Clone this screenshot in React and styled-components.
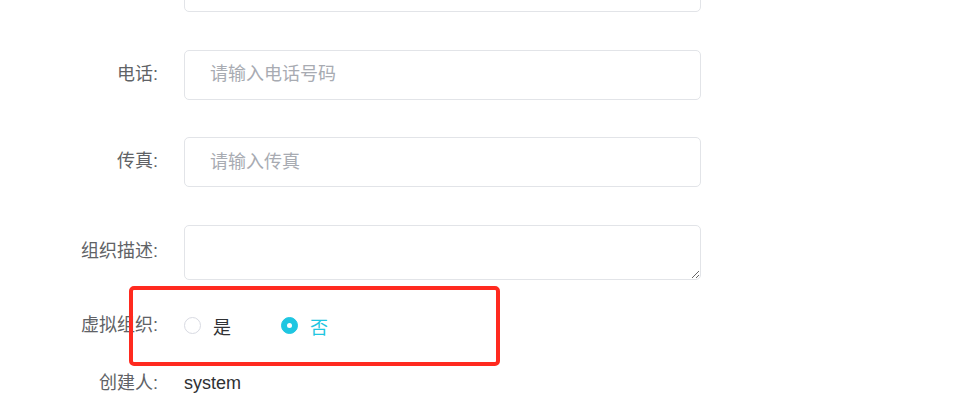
import React from "react";
import styled, { createGlobalStyle } from "styled-components";

const GlobalStyle = createGlobalStyle`
  html, body {
    margin: 0;
    padding: 0;
    background: #ffffff;
    overflow: hidden;
  }
  body {
    font-family: "Liberation Sans", "Noto Sans CJK SC", sans-serif;
  }
`;

const FormStyled = styled.form`
  position: relative;
  width: 973px;
  height: 400px;
  overflow: hidden;

  .form__body {
    display: flex;
    flex-direction: column;
    margin-top: -38px;
  }
`;

const Row = styled.div`
  display: flex;
  align-items: center;
  height: ${({ $h }) => $h || 50}px;
  margin-bottom: ${({ $mb }) => ($mb === undefined ? 37.5 : $mb)}px;
`;

const Label = styled.label`
  width: 160px;
  flex-shrink: 0;
  box-sizing: border-box;
  padding-right: 2px;
  padding-bottom: 2px;
  text-align: right;
  font-size: 18px;
  line-height: 20px;
  color: #606266;
`;

const Field = styled.div`
  margin-left: 24px;
  display: flex;
  align-items: center;
`;

const Input = styled.input`
  width: 517px;
  height: 50px;
  box-sizing: border-box;
  border: 1px solid #e2e4e8;
  border-radius: 5px;
  padding: 0 25px;
  font-family: inherit;
  font-size: 18px;
  color: #606266;
  outline: none;

  &::placeholder {
    color: #a8abb2;
  }
`;

const TextArea = styled.textarea`
  display: block;
  width: 517px;
  height: 55px;
  box-sizing: border-box;
  border: 1px solid #e2e4e8;
  border-radius: 5px;
  padding: 8px 25px;
  font-family: inherit;
  font-size: 18px;
  outline: none;
  resize: both;
`;

const Radio = styled.span`
  display: inline-flex;
  align-items: center;
  margin-right: ${({ $last }) => ($last ? 0 : 50)}px;
  font-size: 18px;
  color: ${({ $checked }) => ($checked ? "#1fc6e1" : "#303133")};
  cursor: pointer;

  .radio__dot {
    width: 17px;
    height: 17px;
    box-sizing: border-box;
    border-radius: 50%;
    margin-right: 12px;
    display: inline-flex;
    align-items: center;
    justify-content: center;
    border: 1px solid ${({ $checked }) => ($checked ? "#1fc6e1" : "#d8dae2")};
    background: ${({ $checked }) => ($checked ? "#1fc6e1" : "#ffffff")};

    &::after {
      content: "";
      width: 5px;
      height: 5px;
      border-radius: 50%;
      background: #ffffff;
      display: ${({ $checked }) => ($checked ? "block" : "none")};
    }
  }
`;

const Value = styled.span`
  font-size: 18px;
  color: #303133;
`;

const Highlight = styled.div`
  position: absolute;
  left: 129px;
  top: 286px;
  width: 371px;
  height: 80px;
  box-sizing: border-box;
  border: 4px solid #ff2a1f;
  border-radius: 5px;
  pointer-events: none;
`;

function App() {
  return (
    <>
      <GlobalStyle />
      <FormStyled>
        <div className='form__body'>
          <Row>
            <Label />
            <Field>
              <Input />
            </Field>
          </Row>
          <Row>
            <Label>电话:</Label>
            <Field>
              <Input placeholder='请输入电话号码' />
            </Field>
          </Row>
          <Row>
            <Label>传真:</Label>
            <Field>
              <Input placeholder='请输入传真' />
            </Field>
          </Row>
          <Row $h={55} $mb={26}>
            <Label>组织描述:</Label>
            <Field>
              <TextArea />
            </Field>
          </Row>
          <Row $h={40} $mb={18}>
            <Label>虚拟组织:</Label>
            <Field>
              <Radio>
                <span className='radio__dot' />是
              </Radio>
              <Radio $checked $last>
                <span className='radio__dot' />否
              </Radio>
            </Field>
          </Row>
          <Row $h={40} $mb={0}>
            <Label>创建人:</Label>
            <Field>
              <Value>system</Value>
            </Field>
          </Row>
        </div>
        <Highlight />
      </FormStyled>
    </>
  );
}

export default App;
